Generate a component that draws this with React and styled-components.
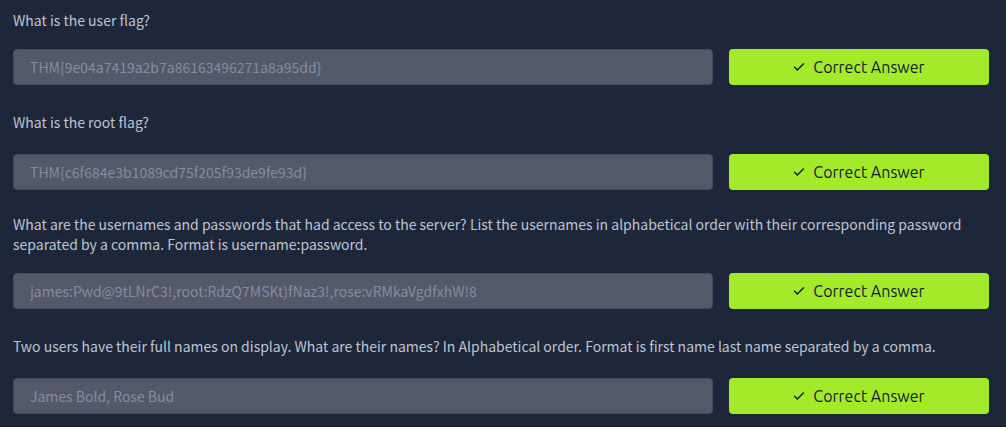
import React from "react";
import styled, { createGlobalStyle } from "styled-components";

const GlobalStyle = createGlobalStyle`
  * {
    box-sizing: border-box;
  }

  body {
    margin: 0;
    background: #1e263a;
    color: #bfc5cf;
    font-family: "Noto Sans CJK SC", "Noto Sans", sans-serif;
    font-size: 14px;
  }
`;

const Questions = styled.main`
  display: flex;
  flex-direction: column;
  gap: 24px;
  padding: 10px 17px 12px 13px;
  border-bottom: 1px solid #151c2b;
`;

const Question = styled.form`
  display: flex;
  flex-direction: column;
  gap: ${({ $roomy }) => ($roomy ? 22 : 19)}px;
  padding-top: ${({ $roomy }) => ($roomy ? 3 : 0)}px;
`;

const Prompt = styled.label`
  line-height: 20px;
`;

const AnswerRow = styled.div`
  display: grid;
  grid-template-columns: minmax(0, 1fr) 260px;
  gap: 16px;
`;

const AnswerInput = styled.input`
  width: 100%;
  height: 36px;
  padding: 0 16px;
  border: 1px solid #444d5f;
  border-radius: 4px;
  background: #535967;
  color: #858e9f;
  font: inherit;
`;

const StatusButton = styled.button`
  display: flex;
  align-items: center;
  justify-content: center;
  gap: 8px;
  height: 36px;
  padding: 0 16px;
  border: 0;
  border-radius: 4px;
  background: #a3ea2a;
  color: #141c2b;
  font-family: Ubuntu, "Noto Sans", sans-serif;
  font-size: 16px;
`;

const CheckIcon = () => (
  <svg width="12" height="12" viewBox="0 0 12 12" fill="none" aria-hidden="true">
    <path d="M1.2 5.8 4.3 8.9 10.8 2.4" stroke="currentColor" strokeWidth="1.4" />
  </svg>
);

const questions = [
  {
    id: "user-flag",
    prompt: "What is the user flag?",
    answer: "THM{9e04a7419a2b7a86163496271a8a95dd}",
  },
  {
    id: "root-flag",
    prompt: "What is the root flag?",
    answer: "THM{c6f684e3b1089cd75f205f93de9fe93d}",
    roomy: true,
  },
  {
    id: "credentials",
    prompt:
      "What are the usernames and passwords that had access to the server? List the usernames in alphabetical order with their corresponding password separated by a comma. Format is username:password.",
    answer: "james:Pwd@9tLNrC3!,root:RdzQ7MSKt)fNaz3!,rose:vRMkaVgdfxhW!8",
  },
  {
    id: "full-names",
    prompt:
      "Two users have their full names on display. What are their names? In Alphabetical order. Format is first name last name separated by a comma.",
    answer: "James Bold, Rose Bud",
    roomy: true,
  },
];

export default function App() {
  return (
    <>
      <GlobalStyle />
      <Questions>
        {questions.map(({ id, prompt, answer, roomy }) => (
          <Question key={id} $roomy={roomy} onSubmit={(e) => e.preventDefault()}>
            <Prompt htmlFor={id}>{prompt}</Prompt>
            <AnswerRow>
              <AnswerInput id={id} type="text" value={answer} readOnly />
              <StatusButton type="button">
                <CheckIcon />
                Correct Answer
              </StatusButton>
            </AnswerRow>
          </Question>
        ))}
      </Questions>
    </>
  );
}
